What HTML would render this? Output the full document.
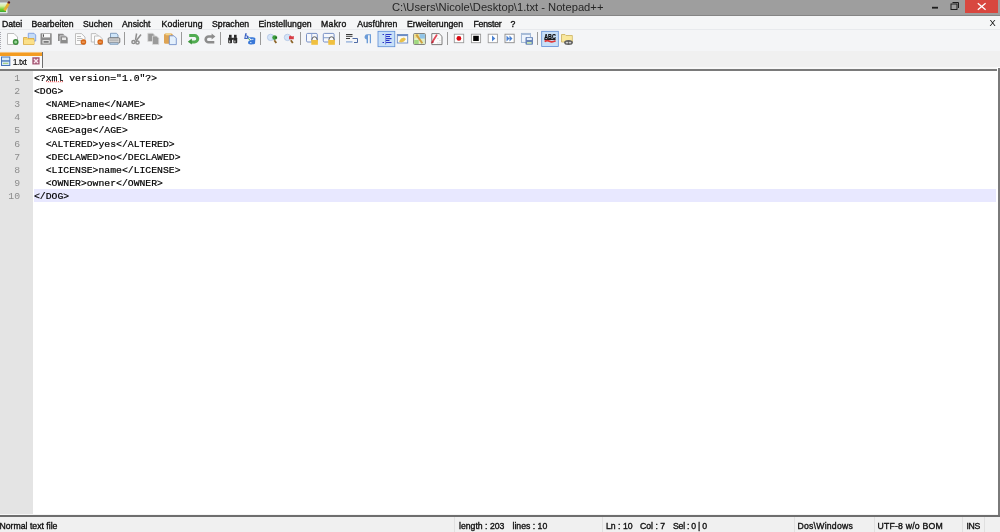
<!DOCTYPE html>
<html><head><meta charset="utf-8">
<style>
*{margin:0;padding:0;box-sizing:border-box}
html,body{width:1000px;height:532px;overflow:hidden;background:#fff;font-family:"Liberation Sans",sans-serif;position:relative}
#wrap{position:absolute;left:0;top:0;width:1000px;height:532px;will-change:transform;background:#fff}
.abs{position:absolute}
#title{left:0;top:0;width:1000px;height:15px;background:#9e9e9e}
#titleline{left:0;top:15px;width:1000px;height:1px;background:#858585}
#ttext{left:392px;top:1px;font-size:11.2px;color:#262626;white-space:nowrap}
#close{left:965px;top:0;width:33px;height:13px;background:#d8473f}
#menu{left:0;top:16px;width:1000px;height:13px;background:#f5f6f7}
.m{position:absolute;top:18.5px;font-size:8.7px;line-height:10px;color:#111;white-space:nowrap;-webkit-text-stroke:0.35px #111}
#menuline{left:0;top:29px;width:1000px;height:1px;background:#e8eaed}
#tool{left:0;top:30px;width:1000px;height:21px;background:#f4f5f7}
#tabbar{left:0;top:51px;width:1000px;height:16px;background:#f0f0f0}
#tabwhite{left:0;top:67px;width:997px;height:2px;background:#f8f8f8}
#tabline{left:0;top:69px;width:997px;height:2px;background:#7a7a7a}
#tab{left:0;top:52px;width:42px;height:17px;background:#f9f9f9}
#tabor{left:0;top:52px;width:42px;height:4px;background:#f39c22}
#tabor2{left:0;top:52px;width:42px;height:1px;background:#f7c27a}
#tabr{left:42px;top:52px;width:1px;height:16px;background:#6e6e6e}
#gutter{left:0;top:71px;width:33px;height:443px;background:#e4e4e4}
#hl{left:34px;top:189px;width:962px;height:13px;background:#e8e8ff}
#code{left:34px;top:71.5px;font-family:"Liberation Mono",monospace;font-size:9.77px;line-height:13.2px;color:#000;white-space:pre;-webkit-text-stroke:0.2px #000}
#nums{left:0;top:71.5px;width:20px;text-align:right;font-family:"Liberation Mono",monospace;font-size:9.77px;line-height:13.2px;color:#8c8c8c;white-space:pre}
#rline{left:998px;top:68px;width:2px;height:449px;background:#7a7a7a}
#statusline{left:0;top:514px;width:998px;height:1px;background:#f6f6f6}#statusline2{left:0;top:515px;width:1000px;height:2px;background:#6e6e6e}
#status{left:0;top:517px;width:1000px;height:15px;background:#f0f0f0}
.s{position:absolute;top:520.5px;font-size:8.7px;line-height:10px;color:#111;white-space:nowrap;-webkit-text-stroke:0.35px #111}
.sep{position:absolute;top:517px;width:1px;height:15px;background:#e0e0e0}
</style></head><body><div id="wrap">
<div id="title" class="abs"></div>
<div id="titleline" class="abs"></div>
<div id="ttext" class="abs">C:\Users\Nicole\Desktop\1.txt - Notepad++</div>
<div id="close" class="abs"></div>
<svg class="abs" style="left:0;top:0" width="1000" height="15">
<defs><linearGradient id="lg" x1="0" y1="0" x2="0" y2="1"><stop offset="0" stop-color="#e8f0f0"/><stop offset="0.35" stop-color="#d8f0a0"/><stop offset="0.7" stop-color="#70cc30"/><stop offset="1" stop-color="#30a030"/></linearGradient></defs>
<rect x="0" y="2.5" width="7" height="10" fill="url(#lg)"/>
<rect x="0" y="12" width="7" height="1.3" fill="#d8e8e0"/>
<rect x="6" y="8" width="1.5" height="5" fill="#e0f0e0"/>
<path d="M8.6 3.5L4.5 10.5" stroke="#e8b030" stroke-width="2.6"/>
<circle cx="8.9" cy="2.4" r="1.2" fill="#602020"/>
<path d="M977.8 3.3L985.6 9.7M985.6 3.3L977.8 9.7" stroke="#fff" stroke-width="1.3"/>
<rect x="932" y="6.8" width="6" height="1.8" fill="#1e1e1e"/>
<rect x="951" y="4" width="6" height="5.5" fill="none" stroke="#1e1e1e" stroke-width="1"/>
<path d="M952.5 2.5H958.5V8" fill="none" stroke="#1e1e1e" stroke-width="1"/>
</svg>
<div id="menu" class="abs"></div>
<span class="m" style="left:2px">Datei</span>
<span class="m" style="left:31.5px">Bearbeiten</span>
<span class="m" style="left:83px">Suchen</span>
<span class="m" style="left:122px">Ansicht</span>
<span class="m" style="left:161.5px;letter-spacing:0.17px">Kodierung</span>
<span class="m" style="left:212px">Sprachen</span>
<span class="m" style="left:258.5px;letter-spacing:0.08px">Einstellungen</span>
<span class="m" style="left:321px;letter-spacing:0.3px">Makro</span>
<span class="m" style="left:357.3px;letter-spacing:0.05px">Ausführen</span>
<span class="m" style="left:407px">Erweiterungen</span>
<span class="m" style="left:473.5px;letter-spacing:-0.22px">Fenster</span>
<span class="m" style="left:510.5px">?</span>
<span class="m" style="left:989.5px;top:18px;font-size:9.3px;-webkit-text-stroke:0">X</span>
<div id="menuline" class="abs"></div>
<div id="tool" class="abs"></div>
<svg class="abs" style="left:0;top:30px" width="1000" height="20" viewBox="0 30 1000 20">
<!-- grip -->
<g fill="#a8a8b0"><rect x="0" y="32" width="1" height="1"/><rect x="0" y="34" width="1" height="1"/><rect x="0" y="36" width="1" height="1"/><rect x="0" y="38" width="1" height="1"/><rect x="0" y="40" width="1" height="1"/><rect x="0" y="42" width="1" height="1"/><rect x="0" y="44" width="1" height="1"/><rect x="0" y="46" width="1" height="1"/><rect x="0" y="48" width="1" height="1"/></g>
<!-- separators -->
<g fill="#9a9a9a"><rect x="124" y="32" width="1" height="13"/><rect x="181" y="32" width="1" height="13"/><rect x="220" y="32" width="1" height="13"/><rect x="260" y="32" width="1" height="13"/><rect x="300" y="32" width="1" height="13"/><rect x="339" y="32" width="1" height="13"/><rect x="447" y="32" width="1" height="13"/><rect x="537" y="32" width="1" height="13"/></g>
<!-- new -->
<path d="M7.5 33.5H14L17.5 37V44.5H7.5Z" fill="#fdfdfd" stroke="#b4b4b4" stroke-width="0.9"/>
<circle cx="15.7" cy="42" r="2.9" fill="#3c8c3c"/><circle cx="15.7" cy="42" r="1.5" fill="#9ad89a"/>
<!-- open -->
<path d="M28.3 33.3H34L35.7 35V41H28.3Z" fill="#c4dcf8" stroke="#7e9ee0" stroke-width="0.9"/>
<path d="M23.5 37.5H27L28 38.5H34V44.5H23.5Z" fill="#f8d46c" stroke="#d8ac4c" stroke-width="0.9"/>
<rect x="24" y="40" width="10" height="4.2" fill="#fbe08a"/>
<!-- save -->
<rect x="40.5" y="33.2" width="11.2" height="11.5" rx="0.5" fill="#8c8c8c"/>
<rect x="42.3" y="33.8" width="7.8" height="3.6" fill="#fafafa"/>
<rect x="43" y="34.3" width="1" height="2.5" fill="#555"/>
<rect x="42.5" y="40.2" width="7.2" height="3.3" fill="#f4f4f4"/>
<rect x="43.5" y="41" width="5.2" height="1.8" fill="#7a7a7a"/>
<!-- save all -->
<path d="M58 33.8H63L65 35.8V41H58Z" fill="#8a8a8a"/>
<path d="M60 35.8H66L68 37.8V43.7H60Z" fill="#8c8c8c" stroke="#f4f4f6" stroke-width="0.6"/>
<rect x="62" y="37.5" width="4" height="2.5" fill="#e8e8e8"/>
<!-- close -->
<path d="M75.5 33.6H81.5L85 37V44.5H75.5Z" fill="#fbfbfb" stroke="#b8b8b8" stroke-width="0.9"/>
<g fill="#b0b0b0"><rect x="77" y="36" width="4" height="0.8"/><rect x="77" y="38" width="5.5" height="0.8"/><rect x="77" y="40" width="4" height="0.8"/></g>
<circle cx="83.4" cy="42" r="2.8" fill="#d86818"/><rect x="82" y="41.6" width="2.8" height="0.9" fill="#f7c090"/>
<!-- close all -->
<path d="M91.3 33.6H96L98 35.6V42H91.3Z" fill="#fbfbfb" stroke="#b8b8b8" stroke-width="0.9"/>
<path d="M94.5 36H99.5L102.5 39V44.5H94.5Z" fill="#fbfbfb" stroke="#b8b8b8" stroke-width="0.9"/>
<circle cx="100.2" cy="42" r="2.8" fill="#d86818"/><rect x="98.8" y="41.6" width="2.8" height="0.9" fill="#f7c090"/>
<!-- print -->
<path d="M110.5 33.3H116.5L118 35V38H110.5Z" fill="#cfe6fa" stroke="#6c8cb0" stroke-width="0.8"/>
<rect x="108.2" y="37.8" width="11.6" height="5.2" rx="1" fill="#d8d8d8" stroke="#6a6a6a" stroke-width="0.9"/>
<rect x="109.5" y="39.3" width="9" height="2" fill="#b8b8b8"/>
<rect x="110" y="43" width="8" height="1.3" fill="#c8dcf0" stroke="#6c8cb0" stroke-width="0.6"/>
<!-- cut -->
<g stroke="#8e8e8e" stroke-width="1.5" fill="none"><path d="M136.6 33.5L135.5 40"/><path d="M141 34.5L136 41"/><circle cx="133.5" cy="42" r="1.6"/><circle cx="137.5" cy="42.5" r="1.6"/></g>
<!-- copy -->
<path d="M147.8 33.3H152.8L154.8 35.3V41.5H147.8Z" fill="#999" stroke="#d8d8d8" stroke-width="0.8"/>
<path d="M152.5 36H156.5L158.8 38.3V44.5H152.5Z" fill="#9a9a9a" stroke="#dadada" stroke-width="0.8"/>
<!-- paste -->
<rect x="164" y="33.5" width="8.8" height="10.2" rx="1.5" fill="#dea454"/>
<rect x="165.5" y="33.2" width="5.6" height="2" rx="0.8" fill="#f4d48a"/>
<path d="M169.3 35.8H174L176.3 38.1V44.6H169.3Z" fill="#e4f0fc" stroke="#6484c4" stroke-width="0.8"/>
<!-- undo -->
<path d="M189.2 35.6H194.6A3.15 3.15 0 0 1 194.6 41.9H191" fill="none" stroke="#52ac52" stroke-width="3"/>
<path d="M187.8 41.7L191.8 38.4V44.6Z" fill="#3c963c"/>
<!-- redo -->
<path d="M214.3 42.3H208.6A2.9 2.9 0 0 1 208.6 36.5H212.5" fill="none" stroke="#8c8c8c" stroke-width="2.6"/>
<path d="M215.4 36.5L211.6 33.5V39.6Z" fill="#8c8c8c"/>
<!-- find -->
<g fill="#2a2a2a"><rect x="228.2" y="37.5" width="3.8" height="5.7" rx="0.8"/><rect x="233.4" y="37.5" width="3.8" height="5.7" rx="0.8"/><rect x="229" y="34.8" width="2.6" height="3" /><rect x="234" y="34.8" width="2.6" height="3"/><rect x="231.5" y="37.8" width="2.2" height="2"/></g>
<g fill="#e8e8e8"><rect x="229.2" y="40.5" width="1" height="2"/><rect x="234.4" y="40.5" width="1" height="2"/></g>
<!-- replace -->
<path d="M245.2 33.2H246.8L246.3 35.6A2 2 0 0 1 248.8 37A2 2 0 0 1 246.6 38.9H244.2Z" fill="#3c64c4"/>
<rect x="245.6" y="36.3" width="1.3" height="1.6" fill="#f4f6fa"/>
<path d="M248.5 37.5C250 37.3 254.5 36.8 255.4 38.5L255 43.6C254 44.8 249 44.8 248.2 43.5C247.8 42 248.5 40.5 250 40.2L252.5 40L250.5 38.8Z" fill="#3a78d8"/>
<rect x="252.2" y="38.8" width="1.2" height="1.1" fill="#d8ecff"/><rect x="250.2" y="42" width="1.2" height="1.1" fill="#d8ecff"/>
<path d="M248 38.3L250.2 40.3" stroke="#44a850" stroke-width="1"/>
<!-- zoom in -->
<circle cx="270.6" cy="37.4" r="3.2" fill="#d4e4f8" stroke="#b0c4e4" stroke-width="0.8"/>
<path d="M274.3 40.2L276.3 43" stroke="#8c6428" stroke-width="1.8"/>
<circle cx="274.6" cy="37.6" r="2.3" fill="#3c9c3c"/><rect x="275.3" y="36.6" width="1.8" height="2" fill="#1c6c1c"/>
<!-- zoom out -->
<circle cx="287.5" cy="37.4" r="3.2" fill="#d4e4f8" stroke="#b0c4e4" stroke-width="0.8"/>
<path d="M290.8 40.2L292.8 43" stroke="#8c6428" stroke-width="1.8"/>
<path d="M289 36.5L290.5 35.5L292 36.5L293.8 36V39.2H289Z" fill="#d83c44"/>
<!-- sync v -->
<rect x="306.5" y="33.4" width="10.8" height="8.6" rx="1.2" fill="#f6f8fc" stroke="#6a84c0" stroke-width="0.9"/>
<rect x="311.3" y="33.6" width="0.9" height="8.2" fill="#8aa0d0"/>
<path d="M312 40.5V39.3A2.5 2.5 0 0 1 317 39.3V40.5" fill="#fafafa" stroke="#5a5a5a" stroke-width="1"/>
<rect x="311.3" y="40" width="6.6" height="4.8" fill="#f0c040"/>
<!-- sync h -->
<rect x="323.3" y="33.4" width="10.8" height="8.6" rx="1.2" fill="#f6f8fc" stroke="#6a84c0" stroke-width="0.9"/>
<rect x="323.5" y="37.3" width="10.4" height="0.9" fill="#7a94c8"/>
<path d="M329 40.5V39.3A2.5 2.5 0 0 1 334 39.3V40.5" fill="#fafafa" stroke="#5a5a5a" stroke-width="1"/>
<rect x="328.3" y="40" width="6.6" height="4.8" fill="#f0c040"/>
<!-- word wrap -->
<g fill="#3a3a3a"><rect x="346" y="34" width="6.5" height="1"/><rect x="346" y="35.8" width="6.5" height="1"/><rect x="346" y="38" width="4" height="1"/></g>
<rect x="346" y="41.3" width="6.5" height="1.2" fill="#88a8d8"/>
<path d="M352.5 38.5H357.5V42.5H354" fill="none" stroke="#3c5c9c" stroke-width="0.9"/>
<!-- pilcrow -->
<path d="M368 34.3H371V43.2H369.8V35.2H368V43.2H366.6V39.5A2.6 2.6 0 0 1 368 34.3Z" fill="#6c9cd8"/>
<!-- indent guide pressed -->
<rect x="378" y="31.3" width="16.8" height="15.4" fill="#c8e0f8" stroke="#5c8cd4" stroke-width="0.8"/>
<g fill="#2a36c8"><rect x="382.5" y="34" width="1.5" height="1"/><rect x="386" y="34" width="5.5" height="1"/><rect x="386" y="36" width="4" height="1"/><rect x="386" y="38" width="5.5" height="1.2"/><rect x="386" y="40" width="3.5" height="1"/><rect x="386" y="42" width="5.5" height="1"/><rect x="382.5" y="42" width="1.5" height="1"/><rect x="385.3" y="34" width="0.8" height="10.5" fill="#6070d8"/></g>
<!-- udl -->
<rect x="397.3" y="34.5" width="10.4" height="8.5" fill="#fbfbf6" stroke="#6c8cc4" stroke-width="0.9"/>
<rect x="397.3" y="34.5" width="10.4" height="1.6" fill="#6c8cc4"/>
<path d="M399 41.5L401 38.5L404 37.5L406 39L404 41.5L401 42.5Z" fill="#e8c04c"/>
<!-- doc map -->
<rect x="413.6" y="33.5" width="11.8" height="11" rx="1" fill="#e8f0c8" stroke="#767676" stroke-width="0.9"/>
<rect x="414.2" y="34.1" width="5" height="4" fill="#f0e090"/>
<rect x="419.5" y="34.1" width="5.4" height="4.5" fill="#90c4e8"/>
<rect x="414.2" y="40" width="4.5" height="4" fill="#a0d880"/>
<rect x="420" y="40" width="4.8" height="4" fill="#dcecc8"/>
<path d="M416.3 34.6L422.3 43.3" stroke="#d0a040" stroke-width="2"/>
<!-- function list -->
<path d="M431.8 33.6H439.2L442 36.4V44.6H431.8Z" fill="#fcfcfc" stroke="#6e6e6e" stroke-width="0.9"/>
<g fill="#b0b0b0"><rect x="437.5" y="38" width="0.8" height="0.8"/><rect x="439.5" y="40" width="0.8" height="0.8"/><rect x="437.5" y="42.5" width="0.8" height="0.8"/><rect x="439.5" y="42.5" width="0.8" height="0.8"/></g>
<path d="M436.6 35.3L432.3 42" stroke="#e04858" stroke-width="1.8" stroke-linecap="round"/>
<path d="M431.5 42.8L433.5 41.6" stroke="#b02838" stroke-width="1.4"/>
<!-- record -->
<rect x="454.3" y="34.2" width="9.4" height="8.5" fill="#fff" stroke="#9a9a9a" stroke-width="0.9"/>
<circle cx="458.9" cy="38.4" r="2.4" fill="#d80810"/>
<!-- stop -->
<rect x="471.4" y="34.2" width="9.2" height="8.5" fill="#fff" stroke="#9a9a9a" stroke-width="0.9"/>
<rect x="473.2" y="35.8" width="5.6" height="5.2" fill="#050505"/>
<!-- play -->
<rect x="488.2" y="34.2" width="9.2" height="8.5" fill="#fff" stroke="#9a9a9a" stroke-width="0.9"/>
<path d="M492 35.6L495.3 38.5L492 41.4Z" fill="#4a80d0"/>
<!-- play multi -->
<rect x="505" y="34.2" width="9.2" height="8.5" fill="#fff" stroke="#8a8a8a" stroke-width="0.9"/>
<path d="M506.5 35.6L509.5 38.5L506.5 41.4ZM509.5 35.6L512.5 38.5L509.5 41.4Z" fill="#4a80d0"/>
<!-- save macro -->
<rect x="521.4" y="33.4" width="9" height="9" fill="#eef4fc" stroke="#98b0d0" stroke-width="0.9"/>
<rect x="521.4" y="33.4" width="9" height="1.6" fill="#a8bcd8"/>
<rect x="525.5" y="37" width="7.5" height="7.8" rx="1" fill="#6884b8"/>
<rect x="526.8" y="37.8" width="5" height="2.2" fill="#e4eefa"/>
<rect x="527" y="42" width="4.6" height="1.8" fill="#c8e4b0"/>
<!-- spell pressed -->
<rect x="541.7" y="31.3" width="16.6" height="15.2" fill="#c8e0f8" stroke="#5c8cd4" stroke-width="0.8"/>
<text x="544.3" y="38.8" font-family="Liberation Sans" font-weight="bold" font-size="6.6" fill="#080808" textLength="11.4" lengthAdjust="spacingAndGlyphs" stroke="#080808" stroke-width="0.25">ABC</text>
<rect x="544.4" y="38.9" width="11.2" height="1" fill="#080808"/>
<path d="M544.6 41.5Q547 40 549.5 41.3T555.6 40.8" fill="none" stroke="#e03838" stroke-width="1.8"/>
<!-- folder link -->
<path d="M561.5 34.5H565L566 35.5H572.3V42H561.5Z" fill="#f6e4a0" stroke="#d0b868" stroke-width="0.9"/>
<rect x="562.3" y="36.3" width="9.3" height="5" fill="#fae89c"/>
<ellipse cx="568.5" cy="42.6" rx="4.4" ry="2.5" fill="#5e5e5e"/>
<ellipse cx="567" cy="42.6" rx="1.3" ry="0.9" fill="#cfcfcf"/>
<ellipse cx="570" cy="42.6" rx="1.3" ry="0.9" fill="#cfcfcf"/>
</svg>
<div id="tabbar" class="abs"></div>
<div id="tabwhite" class="abs"></div>
<div id="tab" class="abs"></div>
<div id="tabor" class="abs"></div>
<div id="tabor2" class="abs"></div>
<div id="tabr" class="abs"></div>
<svg class="abs" style="left:0;top:52px" width="42" height="17" viewBox="0 52 42 17">
<rect x="1.5" y="57" width="8.3" height="8.5" fill="#d8eaf8" stroke="#4674b8" stroke-width="1"/>
<rect x="1.5" y="60.3" width="8.3" height="1.3" fill="#4674b8"/>
<rect x="3" y="62.8" width="5.3" height="1.2" fill="#a8d088"/>
<rect x="32.3" y="57.2" width="7.3" height="7.3" fill="#a85c78"/>
<path d="M34 59L38 63M38 59L34 63" stroke="#fbe8f0" stroke-width="1.4"/>
</svg>
<span class="abs" style="left:12.8px;top:56.6px;font-size:8.7px;line-height:10px;color:#111;white-space:nowrap;letter-spacing:-0.55px;-webkit-text-stroke:0.15px #111">1.txt</span>
<div id="tabline" class="abs"></div>
<div id="gutter" class="abs"></div>
<div id="hl" class="abs"></div>
<div id="nums" class="abs">1
2
3
4
5
6
7
8
9
10</div>
<div id="code" class="abs">&lt;?xml version="1.0"?&gt;
&lt;DOG&gt;
  &lt;NAME&gt;name&lt;/NAME&gt;
  &lt;BREED&gt;breed&lt;/BREED&gt;
  &lt;AGE&gt;age&lt;/AGE&gt;
  &lt;ALTERED&gt;yes&lt;/ALTERED&gt;
  &lt;DECLAWED&gt;no&lt;/DECLAWED&gt;
  &lt;LICENSE&gt;name&lt;/LICENSE&gt;
  &lt;OWNER&gt;owner&lt;/OWNER&gt;
&lt;/DOG&gt;</div>
<svg class="abs" style="left:45px;top:80px" width="20" height="5" viewBox="45 80 20 5">
<path d="M46 81.5H63.5" fill="none" stroke="#e04848" stroke-width="1" stroke-dasharray="1 1" stroke-opacity="0.85"/>
<path d="M46.5 82.4H63.5" fill="none" stroke="#e87878" stroke-width="0.7" stroke-dasharray="1 1" stroke-dashoffset="1" stroke-opacity="0.6"/>
</svg>
<div id="rline" class="abs"></div>
<div id="statusline" class="abs"></div><div id="statusline2" class="abs"></div>
<div id="status" class="abs"></div>
<div class="sep" style="left:454px"></div>
<div class="sep" style="left:602px"></div>
<div class="sep" style="left:794px"></div>
<div class="sep" style="left:874px"></div>
<div class="sep" style="left:962px"></div>
<div class="sep" style="left:984px"></div>
<span class="s" style="left:-0.5px">Normal text file</span>
<span class="s" style="left:459px">length : 203</span>
<span class="s" style="left:512.5px">lines : 10</span>
<span class="s" style="left:606px">Ln : 10</span>
<span class="s" style="left:640px">Col : 7</span>
<span class="s" style="left:673px;letter-spacing:-0.25px">Sel : 0 | 0</span>
<span class="s" style="left:797.5px;letter-spacing:0.22px">Dos\Windows</span>
<span class="s" style="left:877.5px;letter-spacing:0.2px">UTF-8 w/o BOM</span>
<span class="s" style="left:966.5px;letter-spacing:-0.4px">INS</span>
</div></body></html>
